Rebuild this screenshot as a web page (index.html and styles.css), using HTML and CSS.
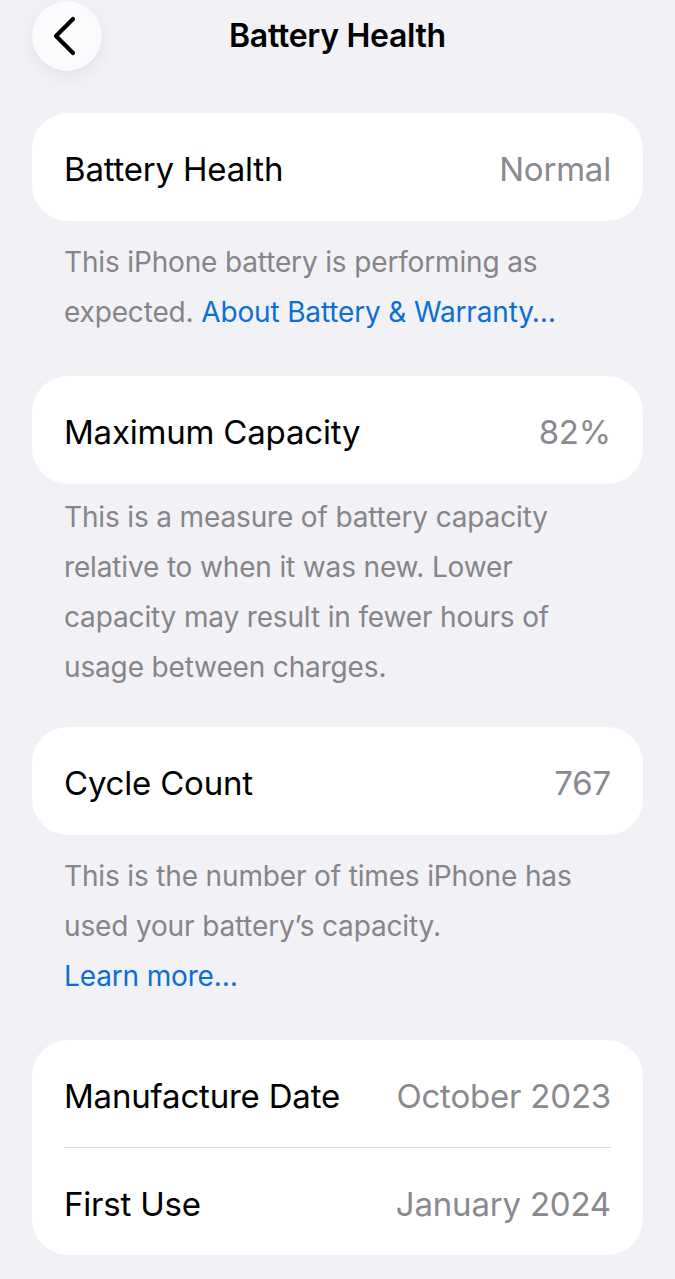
FILE: index.html
```html
<!DOCTYPE html>
<html lang="en">
<head>
<meta charset="utf-8">
<title>Battery Health</title>
<link rel="stylesheet" href="styles.css">
</head>
<body>
<div class="screen">
  <header class="navbar">
    <div class="nav-left">
      <button class="back-btn" aria-label="Back">
        <svg width="26" height="40" viewBox="0 0 26 40" aria-hidden="true">
          <path d="M21 3 L4 20 L21 37" fill="none" stroke="#000" stroke-width="4.2" stroke-linecap="round" stroke-linejoin="round"/>
        </svg>
      </button>
    </div>
    <h1 class="nav-title">Battery Health</h1>
    <div class="nav-right"></div>
  </header>

  <main class="content">
    <section class="group">
      <div class="card">
        <div class="row"><span class="label">Battery Health</span><span class="value">Normal</span></div>
      </div>
      <p class="footer">This iPhone battery is performing as expected. <a class="link" href="#">About Battery &amp; Warranty…</a></p>
    </section>

    <section class="group">
      <div class="card">
        <div class="row"><span class="label">Maximum Capacity</span><span class="value">82%</span></div>
      </div>
      <p class="footer footer-tight">This is a measure of battery capacity relative to when it was new. Lower capacity may result in fewer hours of usage between charges.</p>
    </section>

    <section class="group">
      <div class="card">
        <div class="row"><span class="label">Cycle Count</span><span class="value">767</span></div>
      </div>
      <p class="footer">This is the number of times iPhone has used your battery’s capacity.<br><a class="link" href="#">Learn more…</a></p>
    </section>

    <section class="group">
      <div class="card">
        <div class="row row-split"><span class="label">Manufacture Date</span><span class="value">October 2023</span></div>
        <div class="divider"></div>
        <div class="row row-split"><span class="label">First Use</span><span class="value">January 2024</span></div>
      </div>
    </section>
  </main>
</div>
</body>
</html>
```

FILE: styles.css
```css
* { box-sizing: border-box; }

html, body {
  margin: 0;
  padding: 0;
  background: #f1f1f6;
}

body {
  font-family: Inter, "Noto Sans", "Liberation Sans", sans-serif;
  color: #000;
  -webkit-font-smoothing: antialiased;
}

.screen {
  width: 675px;
  min-height: 1279px;
  overflow: hidden;
}

.navbar {
  display: grid;
  grid-template-columns: 1fr auto 1fr;
  align-items: center;
  align-content: start;
  height: 113px;
  padding-top: 1px;
}

.nav-left {
  padding-left: 32px;
}

.back-btn {
  width: 70px;
  height: 70px;
  border: none;
  border-radius: 50%;
  background: #fbfbfd;
  box-shadow: 0 6px 18px rgba(0, 0, 0, 0.06), 0 1px 3px rgba(0, 0, 0, 0.03);
  display: flex;
  align-items: center;
  justify-content: center;
  padding: 0 4px 0 0;
  cursor: pointer;
}

.nav-title {
  margin: 0;
  font-size: 32px;
  font-weight: 600;
  letter-spacing: -0.3px;
  line-height: 70px;
  text-align: center;
}

.content {
  padding: 0 32px;
}

.card {
  background: #fff;
  border-radius: 36px;
}

.row {
  height: 108px;
  display: flex;
  align-items: center;
  justify-content: space-between;
  padding: 4px 32px 0;
  font-size: 33px;
  letter-spacing: -0.2px;
}

.row-split {
  height: 107px;
}

.label {
  color: #000;
}

.value {
  color: #8a8a8e;
}

.divider {
  height: 1px;
  margin: 0 32px;
  background: #dcdce0;
}

.footer {
  margin: 0;
  padding: 16px 32px 39px;
  font-size: 28px;
  line-height: 50px;
  letter-spacing: -0.15px;
  color: #85858a;
}

.footer-tight {
  padding-top: 8px;
  padding-bottom: 35px;
}

.link {
  color: #0b6fd4;
  text-decoration: none;
}
```
